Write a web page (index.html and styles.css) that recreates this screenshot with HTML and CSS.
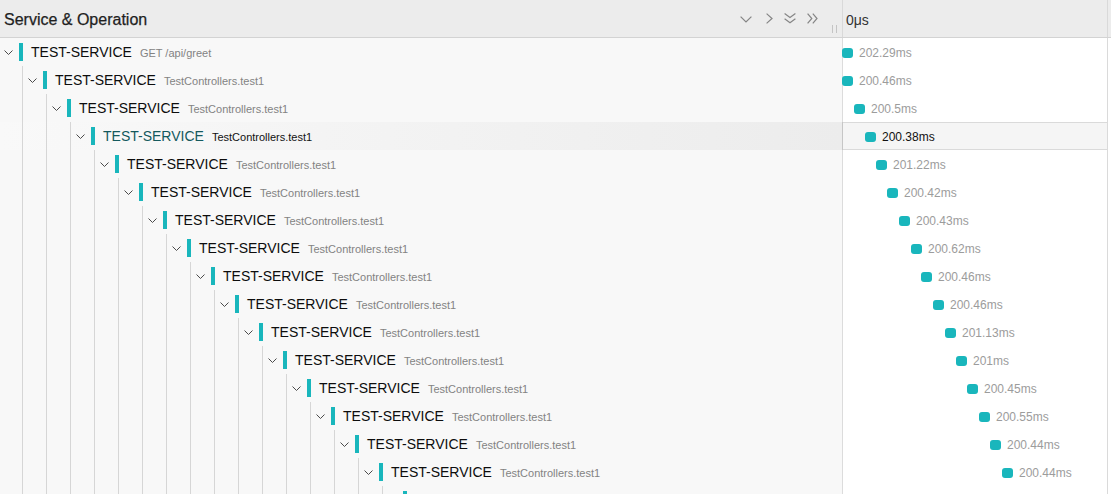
FILE: index.html
```html
<!DOCTYPE html>
<html lang="en">
<head>
<meta charset="utf-8">
<title>Trace</title>
<link rel="stylesheet" href="styles.css">
</head>
<body>
<div class="view">
  <div class="header">
    <div class="h-left">
      <span class="title">Service &amp; Operation</span>
      <div class="tools">
        <svg class="ic ic-down" width="12" height="7" viewBox="0 0 12 7"><path d="M0.6 0.6 L6 6 L11.4 0.6"/></svg>
        <svg class="ic ic-right" width="7" height="11" viewBox="0 0 7 11"><path d="M0.6 0.6 L6 5.5 L0.6 10.4"/></svg>
        <svg class="ic ic-ddown" width="12" height="11" viewBox="0 0 12 11"><path d="M0.6 0.6 L6 4.6 L11.4 0.6 M0.6 5.8 L6 9.8 L11.4 5.8"/></svg>
        <svg class="ic ic-dright" width="11" height="11" viewBox="0 0 11 11"><path d="M0.6 0.6 L4.8 5.5 L0.6 10.4 M5.8 0.6 L10 5.5 L5.8 10.4"/></svg>
        <span class="grip"></span>
      </div>
    </div>
    <div class="h-right"><span class="tick">0μs</span></div>
  </div>

  <div class="rows">
    <div class="row">
      <div class="name" style="--d:0"><svg class="tw" width="9" height="5" viewBox="0 0 9 5"><path d="M0.5 0.5 L4.5 4.5 L8.5 0.5"/></svg><span class="sbar"></span><span class="svc">TEST-SERVICE</span><span class="op">GET /api/greet</span></div>
      <div class="tl"><span class="span" style="margin-left:-1px"></span><span class="dur">202.29ms</span></div>
    </div>
    <div class="row">
      <div class="name" style="--d:1"><svg class="tw" width="9" height="5" viewBox="0 0 9 5"><path d="M0.5 0.5 L4.5 4.5 L8.5 0.5"/></svg><span class="sbar"></span><span class="svc">TEST-SERVICE</span><span class="op">TestControllers.test1</span></div>
      <div class="tl"><span class="span" style="margin-left:-1px"></span><span class="dur">200.46ms</span></div>
    </div>
    <div class="row">
      <div class="name" style="--d:2"><svg class="tw" width="9" height="5" viewBox="0 0 9 5"><path d="M0.5 0.5 L4.5 4.5 L8.5 0.5"/></svg><span class="sbar"></span><span class="svc">TEST-SERVICE</span><span class="op">TestControllers.test1</span></div>
      <div class="tl"><span class="span" style="margin-left:11px"></span><span class="dur">200.5ms</span></div>
    </div>
    <div class="row sel">
      <div class="name" style="--d:3"><svg class="tw" width="9" height="5" viewBox="0 0 9 5"><path d="M0.5 0.5 L4.5 4.5 L8.5 0.5"/></svg><span class="sbar"></span><span class="svc">TEST-SERVICE</span><span class="op">TestControllers.test1</span></div>
      <div class="tl"><span class="span" style="margin-left:22px"></span><span class="dur">200.38ms</span></div>
    </div>
    <div class="row">
      <div class="name" style="--d:4"><svg class="tw" width="9" height="5" viewBox="0 0 9 5"><path d="M0.5 0.5 L4.5 4.5 L8.5 0.5"/></svg><span class="sbar"></span><span class="svc">TEST-SERVICE</span><span class="op">TestControllers.test1</span></div>
      <div class="tl"><span class="span" style="margin-left:33px"></span><span class="dur">201.22ms</span></div>
    </div>
    <div class="row">
      <div class="name" style="--d:5"><svg class="tw" width="9" height="5" viewBox="0 0 9 5"><path d="M0.5 0.5 L4.5 4.5 L8.5 0.5"/></svg><span class="sbar"></span><span class="svc">TEST-SERVICE</span><span class="op">TestControllers.test1</span></div>
      <div class="tl"><span class="span" style="margin-left:44px"></span><span class="dur">200.42ms</span></div>
    </div>
    <div class="row">
      <div class="name" style="--d:6"><svg class="tw" width="9" height="5" viewBox="0 0 9 5"><path d="M0.5 0.5 L4.5 4.5 L8.5 0.5"/></svg><span class="sbar"></span><span class="svc">TEST-SERVICE</span><span class="op">TestControllers.test1</span></div>
      <div class="tl"><span class="span" style="margin-left:56px"></span><span class="dur">200.43ms</span></div>
    </div>
    <div class="row">
      <div class="name" style="--d:7"><svg class="tw" width="9" height="5" viewBox="0 0 9 5"><path d="M0.5 0.5 L4.5 4.5 L8.5 0.5"/></svg><span class="sbar"></span><span class="svc">TEST-SERVICE</span><span class="op">TestControllers.test1</span></div>
      <div class="tl"><span class="span" style="margin-left:68px"></span><span class="dur">200.62ms</span></div>
    </div>
    <div class="row">
      <div class="name" style="--d:8"><svg class="tw" width="9" height="5" viewBox="0 0 9 5"><path d="M0.5 0.5 L4.5 4.5 L8.5 0.5"/></svg><span class="sbar"></span><span class="svc">TEST-SERVICE</span><span class="op">TestControllers.test1</span></div>
      <div class="tl"><span class="span" style="margin-left:78px"></span><span class="dur">200.46ms</span></div>
    </div>
    <div class="row">
      <div class="name" style="--d:9"><svg class="tw" width="9" height="5" viewBox="0 0 9 5"><path d="M0.5 0.5 L4.5 4.5 L8.5 0.5"/></svg><span class="sbar"></span><span class="svc">TEST-SERVICE</span><span class="op">TestControllers.test1</span></div>
      <div class="tl"><span class="span" style="margin-left:90px"></span><span class="dur">200.46ms</span></div>
    </div>
    <div class="row">
      <div class="name" style="--d:10"><svg class="tw" width="9" height="5" viewBox="0 0 9 5"><path d="M0.5 0.5 L4.5 4.5 L8.5 0.5"/></svg><span class="sbar"></span><span class="svc">TEST-SERVICE</span><span class="op">TestControllers.test1</span></div>
      <div class="tl"><span class="span" style="margin-left:102px"></span><span class="dur">201.13ms</span></div>
    </div>
    <div class="row">
      <div class="name" style="--d:11"><svg class="tw" width="9" height="5" viewBox="0 0 9 5"><path d="M0.5 0.5 L4.5 4.5 L8.5 0.5"/></svg><span class="sbar"></span><span class="svc">TEST-SERVICE</span><span class="op">TestControllers.test1</span></div>
      <div class="tl"><span class="span" style="margin-left:113px"></span><span class="dur">201ms</span></div>
    </div>
    <div class="row">
      <div class="name" style="--d:12"><svg class="tw" width="9" height="5" viewBox="0 0 9 5"><path d="M0.5 0.5 L4.5 4.5 L8.5 0.5"/></svg><span class="sbar"></span><span class="svc">TEST-SERVICE</span><span class="op">TestControllers.test1</span></div>
      <div class="tl"><span class="span" style="margin-left:124px"></span><span class="dur">200.45ms</span></div>
    </div>
    <div class="row">
      <div class="name" style="--d:13"><svg class="tw" width="9" height="5" viewBox="0 0 9 5"><path d="M0.5 0.5 L4.5 4.5 L8.5 0.5"/></svg><span class="sbar"></span><span class="svc">TEST-SERVICE</span><span class="op">TestControllers.test1</span></div>
      <div class="tl"><span class="span" style="margin-left:136px"></span><span class="dur">200.55ms</span></div>
    </div>
    <div class="row">
      <div class="name" style="--d:14"><svg class="tw" width="9" height="5" viewBox="0 0 9 5"><path d="M0.5 0.5 L4.5 4.5 L8.5 0.5"/></svg><span class="sbar"></span><span class="svc">TEST-SERVICE</span><span class="op">TestControllers.test1</span></div>
      <div class="tl"><span class="span" style="margin-left:147px"></span><span class="dur">200.44ms</span></div>
    </div>
    <div class="row">
      <div class="name" style="--d:15"><svg class="tw" width="9" height="5" viewBox="0 0 9 5"><path d="M0.5 0.5 L4.5 4.5 L8.5 0.5"/></svg><span class="sbar"></span><span class="svc">TEST-SERVICE</span><span class="op">TestControllers.test1</span></div>
      <div class="tl"><span class="span" style="margin-left:159px"></span><span class="dur">200.44ms</span></div>
    </div>
    <div class="row">
      <div class="name" style="--d:16"><span class="tw-space"></span><span class="sbar"></span></div>
      <div class="tl"></div>
    </div>
  </div>
</div>
</body>
</html>
```

FILE: styles.css
```css
html, body {
  margin: 0;
  padding: 0;
  height: 494px;
  overflow: hidden;
  background: #fff;
  font-family: "Liberation Sans", Arial, sans-serif;
}

.view {
  display: flex;
  flex-direction: column;
}

/* Header */
.header {
  display: flex;
  height: 37px;
  background: #ececec;
  border-bottom: 1px solid #d3d3d3;
}

.h-left {
  width: 843px;
  box-sizing: border-box;
  display: flex;
  align-items: center;
  padding: 0 5px 0 4px;
  border-right: 1px solid #d9d9d9;
}

.title {
  font-size: 16px;
  color: #1f1f1f;
  -webkit-text-stroke: 0.25px #1f1f1f;
  position: relative;
  top: 1px;
}

.tools {
  margin-left: auto;
  display: flex;
  align-items: center;
  height: 100%;
}

.ic {
  fill: none;
  stroke: #858585;
  stroke-width: 1.2;
  display: block;
}

.ic-down { margin-right: 14px; position: relative; top: 1px; }
.ic-right { margin-right: 11px; }
.ic-ddown { margin-right: 11px; }
.ic-dright { margin-right: 14px; }

.grip {
  width: 5px;
  height: 8px;
  box-sizing: border-box;
  border-left: 1px solid #c4c4c4;
  border-right: 1px solid #c4c4c4;
  align-self: flex-end;
  margin-bottom: 4px;
}

.h-right {
  flex: 1;
  display: flex;
  align-items: center;
  padding-left: 3px;
  margin-right: 3px;
  border-right: 1px solid #d9d9d9;
}

.tick {
  font-size: 14px;
  color: #333;
  position: relative;
  top: 1px;
}

/* Rows */
.rows {
  display: flex;
  flex-direction: column;
}

.row {
  display: flex;
  height: 28px;
  flex: none;
}

.name {
  --guide: repeating-linear-gradient(to right, transparent 0 22px, #d6d6d6 22px 23px, transparent 23px 24px);
  width: 843px;
  box-sizing: border-box;
  display: flex;
  align-items: center;
  padding-left: calc(4px + var(--d) * 24px);
  border-right: 1px solid #dcdcdc;
  background-color: #f8f8f8;
  background-image: var(--guide);
  background-size: calc(var(--d) * 24px) 100%;
  background-repeat: no-repeat;
  white-space: nowrap;
}

.tw {
  fill: none;
  stroke: #4a4a4a;
  stroke-width: 1;
  display: block;
  margin-right: 6px;
  flex: none;
}

.tw-space {
  width: 9px;
  margin-right: 6px;
  flex: none;
}

.sbar {
  width: 4px;
  height: 18px;
  background: #19b6bc;
  margin-right: 8px;
  flex: none;
}

.svc {
  font-size: 14px;
  color: #0d0d0d;
  margin-right: 8px;
}

.op {
  font-size: 11px;
  color: #838383;
  position: relative;
  top: 1px;
}

.tl {
  flex: 1;
  display: flex;
  align-items: center;
  margin-right: 3px;
  border-right: 1px solid #dadada;
  background: #fff;
}

.span {
  width: 11px;
  height: 10px;
  border-radius: 3px;
  background: #19b6bc;
  flex: none;
  margin-right: 6px;
  position: relative;
  top: 1px;
}

.dur {
  font-size: 12px;
  color: #9c9c9c;
  position: relative;
  top: 1px;
}

/* Selected row */
.row.sel .name {
  background-image: var(--guide), linear-gradient(to right, #f9f9f9, #ececec);
  background-size: calc(var(--d) * 24px) 100%, 100% 100%;
  border-right-color: #c6c6c6;
}

.row.sel .svc {
  color: #14595d;
}

.row.sel .op {
  color: #111;
}

.row.sel .tl {
  background: #f5f5f5;
  box-shadow: inset 0 1px #dadada, inset 0 -1px #dadada;
}

.row.sel .dur {
  color: #111;
}
```
